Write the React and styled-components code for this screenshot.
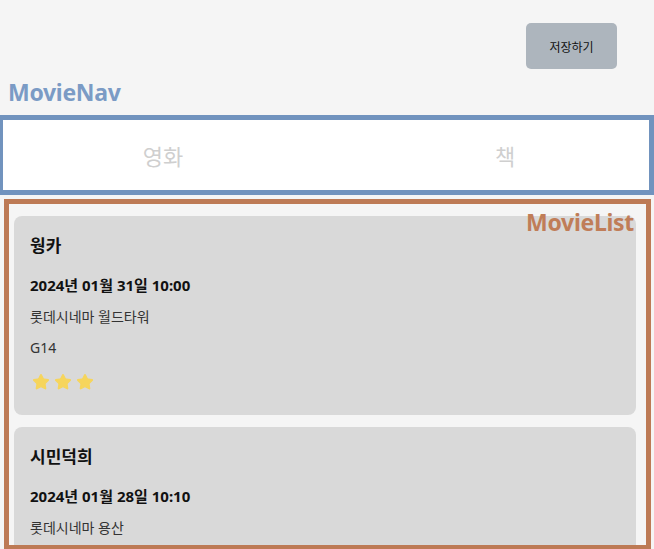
import React from "react"
import styled, { createGlobalStyle } from "styled-components"
import { Star } from "lucide-react"

const GlobalStyle = createGlobalStyle`
  html, body {
    margin: 0;
    padding: 0;
    background: #f5f5f5;
    font-family: "Noto Sans", "Noto Sans CJK KR", sans-serif;
    overflow: hidden;
  }
  * { box-sizing: border-box; }
`

const Page = styled.div`
  width: 654px;
  height: 549px;
  background: #f5f5f5;
  overflow: hidden;
`

const Header = styled.header`
  display: flex;
  justify-content: flex-end;
  padding: 23px 37px 0 0;
`

const SaveButton = styled.button`
  width: 91px;
  height: 46px;
  border: none;
  border-radius: 5px;
  background: #adb5bd;
  color: #111;
  font-family: "Noto Sans CJK KR", sans-serif;
  font-size: 12px;
  cursor: pointer;
`

const SectionLabel = styled.h2`
  margin: 0;
  font-size: 23px;
  line-height: 28px;
  font-weight: 700;
  letter-spacing: -0.3px;
  color: ${p => p.color};
`

const NavLabel = styled(SectionLabel)`
  margin: 9px 0 9px 8px;
`

const Nav = styled.nav`
  display: grid;
  grid-template-columns: 320px 364px;
  height: 80px;
  background: #fff;
  border: 5px solid #7193be;
  border-left-width: 3px;
  overflow: hidden;
`

const Tab = styled.div`
  display: flex;
  align-items: center;
  justify-content: center;
  font-family: "Noto Sans CJK KR", sans-serif;
  font-size: 22px;
  color: #cfcfcf;
`

const List = styled.section`
  position: relative;
  margin: 4px 3px 0 4px;
  height: 351px;
  border: 5px solid #bd7a55;
  padding: 12px 10px 0 5px;
  display: flex;
  flex-direction: column;
  gap: 12px;
  overflow: hidden;
`

const ListLabel = styled(SectionLabel)`
  position: absolute;
  top: 4px;
  right: 12px;
`

const Card = styled.article`
  flex-shrink: 0;
  height: 199px;
  background: #d9d9d9;
  border-radius: 8px;
  padding: 18px 16px 0 16px;
  display: flex;
  flex-direction: column;
  color: #111;
`

const Title = styled.h3`
  margin: 0;
  font-size: 17px;
  line-height: 24px;
  font-weight: 700;
`

const DateText = styled.div`
  margin-top: 15px;
  font-size: 15px;
  line-height: 24px;
  font-weight: 700;
`

const Info = styled.div`
  margin-top: ${p => p.gap || 8}px;
  font-size: 14px;
  line-height: 24px;
  color: #333;
`

const Stars = styled.div`
  margin-top: 10px;
  display: flex;
  gap: 4px;
  height: 24px;
  align-items: center;
  padding-left: 2px;
`

const movies = [
  { title: "웡카", date: "2024년 01월 31일 10:00", place: "롯데시네마 월드타워", seat: "G14", rating: 3 },
  { title: "시민덕희", date: "2024년 01월 28일 10:10", place: "롯데시네마 용산", seat: "F08", rating: 4 },
]

function MovieCard({ movie }) {
  return (
    <Card>
      <Title>{movie.title}</Title>
      <DateText>{movie.date}</DateText>
      <Info>{movie.place}</Info>
      <Info gap={7}>{movie.seat}</Info>
      <Stars>
        {Array.from({ length: movie.rating }).map((_, i) => (
          <Star key={i} size={18} color="#f6d55c" fill="#f6d55c" strokeWidth={1.5} />
        ))}
      </Stars>
    </Card>
  )
}

export default function App() {
  return (
    <Page>
      <GlobalStyle />
      <Header>
        <SaveButton>저장하기</SaveButton>
      </Header>
      <NavLabel color="#7b9bc5">MovieNav</NavLabel>
      <Nav>
        <Tab>영화</Tab>
        <Tab>책</Tab>
      </Nav>
      <List>
        <ListLabel color="#c07d58">MovieList</ListLabel>
        {movies.map(m => (
          <MovieCard key={m.title} movie={m} />
        ))}
      </List>
    </Page>
  )
}
